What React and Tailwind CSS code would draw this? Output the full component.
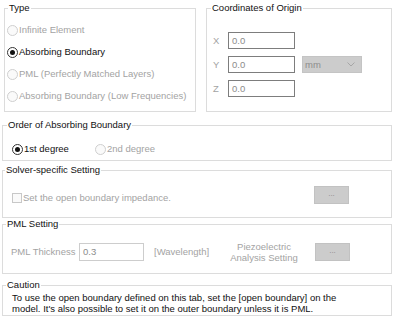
import React from "react";

function Radio({ label, checked, disabled, className = "" }) {
  return (
    <div className={`flex items-center ${className}`}>
      <div
        className={`w-[11px] h-[11px] rounded-full border flex items-center justify-center mr-[1px] ${
          disabled ? "border-[#cfcfcf] bg-[#fafafa]" : "border-[#333333] bg-white"
        }`}
      >
        {checked && <div className="w-[5px] h-[5px] rounded-full bg-[#111111]" />}
      </div>
      <span className={disabled ? "text-[#a3a3a3]" : "text-[#111111]"}>{label}</span>
    </div>
  );
}

function Group({ title, legendClass = "ml-[4px]", className = "", children }) {
  return (
    <fieldset className={`border border-[#dcdcdc] ${className}`}>
      <legend className={`px-[1px] leading-[12px] text-[#111111] ${legendClass}`}>{title}</legend>
      {children}
    </fieldset>
  );
}

function DotsButton() {
  return (
    <div className="w-[35px] h-[18px] bg-[#cccccc] border border-[#c2c2c2] flex items-center justify-center text-[8px] text-[#8a8a8a] leading-none pb-[2px]">
      ...
    </div>
  );
}

function CoordRow({ axis, value, children }) {
  return (
    <div className="flex items-center h-[17px]">
      <span className="w-[21px] pl-[6px] text-[#a3a3a3]">{axis}</span>
      <div className="w-[67px] h-[17px] border border-[#7d7d7d] bg-white flex items-center pl-[3px] text-[#8c8c8c]">
        {value}
      </div>
      {children}
    </div>
  );
}

export default function App() {
  return (
    <div className="w-[397px] h-[321px] bg-white pl-[2px] pt-[2px] text-[9.5px] leading-[12px] font-['Liberation_Sans',Arial,sans-serif] overflow-hidden">
      {/* top row */}
      <div className="flex pl-[2px]">
        <Group title="Type" legendClass="ml-[3px]" className="w-[192px]">
          <div className="pt-[5px] pb-[4px] pl-[2px]">
            <Radio className="h-[22px]" label="Infinite Element" disabled />
            <Radio className="h-[22px]" label="Absorbing Boundary" checked />
            <Radio className="h-[22px]" label="PML (Perfectly Matched Layers)" disabled />
            <Radio className="h-[22px]" label="Absorbing Boundary (Low Frequencies)" disabled />
          </div>
        </Group>
        <Group title="Coordinates of Origin" className="w-[186px] ml-[10px]">
          <div className="pt-[18px] pb-[13px] flex flex-col gap-[7px]">
            <CoordRow axis="X" value="0.0" />
            <CoordRow axis="Y" value="0.0">
              <div className="ml-[7px] w-[60px] h-[17px] bg-[#cccccc] border border-[#c4c4c4] flex items-center justify-between pl-[2px] pr-[6px] text-[#8c8c8c]">
                <span>mm</span>
                <svg width="8" height="5" viewBox="0 0 8 5">
                  <path d="M0.5 0.5 L4 4 L7.5 0.5" fill="none" stroke="#a6a6a6" strokeWidth="1" />
                </svg>
              </div>
            </CoordRow>
            <CoordRow axis="Z" value="0.0" />
          </div>
        </Group>
      </div>

      <Group title="Order of Absorbing Boundary" className="w-[390px] mt-[7px]">
        <div className="pt-[10px] pb-[3px] pl-[9px] flex h-[29px] items-start">
          <Radio className="h-[16px] w-[83px]" label="1st degree" checked />
          <Radio className="h-[16px]" label="2nd degree" disabled />
        </div>
      </Group>

      <Group title="Solver-specific Setting" legendClass="ml-[2px]" className="w-[390px] mt-[3px]">
        <div className="pt-[10px] pb-[13px] pl-[9px] flex items-start">
          <div className="flex items-center mt-[6px] h-[12px]">
            <div className="w-[10px] h-[10px] border border-[#c8c8c8] bg-[#fafafa] mr-[1px]" />
            <span className="text-[#a3a3a3]">Set the open boundary impedance.</span>
          </div>
          <div className="ml-auto mr-[42px]">
            <DotsButton />
          </div>
        </div>
      </Group>

      <Group title="PML Setting" legendClass="ml-[3px]" className="w-[390px]">
        <div className="pt-[11px] pb-[10px] pl-[8px] flex items-center">
          <span className="w-[68px] text-[#a3a3a3]">PML Thickness</span>
          <div className="w-[65px] h-[18px] border border-[#cdcdcd] bg-white flex items-center pl-[3px] text-[#8c8c8c]">
            0.3
          </div>
          <span className="ml-[10px] w-[75px] text-[#a3a3a3]">[Wavelength]</span>
          <div className="w-[70px] text-center leading-[11px] text-[#a3a3a3]">
            <div>Piezoelectric</div>
            <div>Analysis Setting</div>
          </div>
          <div className="ml-[16px]">
            <DotsButton />
          </div>
        </div>
      </Group>

      <Group title="Caution" legendClass="ml-[3px]" className="w-[390px] mt-[5px]">
        <div className="pt-[1px] pb-[1px] pl-[9px] leading-[11px] text-[#111111]">
          <div>To use the open boundary defined on this tab, set the [open boundary] on the</div>
          <div>model. It's also possible to set it on the outer boundary unless it is PML.</div>
        </div>
      </Group>
    </div>
  );
}
